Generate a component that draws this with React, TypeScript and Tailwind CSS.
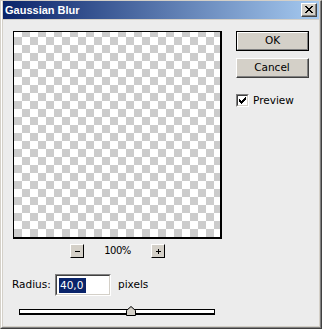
import React from "react";

function CloseGlyph() {
  const rows = [
    [0, 1, 6, 7],
    [1, 2, 5, 6],
    [2, 3, 4, 5],
    [3, 4],
    [2, 3, 4, 5],
    [1, 2, 5, 6],
    [0, 1, 6, 7],
  ];
  return (
    <svg width="8" height="7" viewBox="0 0 8 7" shapeRendering="crispEdges">
      {rows.map((cols, y) =>
        cols.map((x) => <rect key={`${x}-${y}`} x={x} y={y} width="1" height="1" fill="#000" />)
      )}
    </svg>
  );
}

function CheckGlyph() {
  const cols = [2, 3, 4, 3, 2, 1, 0];
  return (
    <svg width="7" height="7" viewBox="0 0 7 7" shapeRendering="crispEdges">
      {cols.map((top, x) => (
        <rect key={x} x={x} y={top} width="1" height="3" fill="#000" />
      ))}
    </svg>
  );
}

function SmallButton({ plus }: { plus?: boolean }) {
  return (
    <div className="w-[14px] h-[14px] bg-[#D4D0C8] border-t border-l border-t-white border-l-white border-r border-b border-r-black border-b-black flex items-center justify-center">
      <svg width="7" height="7" viewBox="0 0 7 7" shapeRendering="crispEdges">
        <rect x="1" y="3" width="5" height="1" fill="#000" />
        {plus && <rect x="3" y="1" width="1" height="5" fill="#000" />}
      </svg>
    </div>
  );
}

export default function App() {
  return (
    <div className="w-[322px] h-[329px] flex flex-col bg-[#D4D0C8] border-t border-l border-t-[#D4D0C8] border-l-[#D4D0C8] border-r border-b border-r-[#404040] border-b-[#404040] font-['DejaVu_Sans',sans-serif] text-[10.5px] text-black">
      <div className="flex-1 flex flex-col border-l border-l-white border-r border-r-[#808080] border-b border-b-[#808080] pl-px pr-px pb-px">
        {/* Title bar */}
        <div className="h-[18px] flex items-center justify-between bg-[linear-gradient(to_right,#0A246A,#A6CAF0)] pl-[2px] pr-[2px]">
          <span className="font-['Liberation_Sans',sans-serif] font-bold text-[11px] text-white leading-none">
            Gaussian Blur
          </span>
          <div className="w-[16px] h-[14px] bg-[#D4D0C8] border-t border-l border-t-white border-l-white border-r border-b border-r-[#404040] border-b-[#404040] flex">
            <div className="flex-1 border-r border-b border-r-[#808080] border-b-[#808080] flex items-start justify-start pl-[3px] pt-[2px]">
              <CloseGlyph />
            </div>
          </div>
        </div>
        <div className="h-px" />
        {/* Content */}
        <div className="flex-1 bg-[#ECECEC] flex flex-col pt-[11px]">
          <div className="flex pl-[10px] gap-[14px]">
            <div className="flex flex-col">
              <div className="w-[209px] h-[208px] flex border-t border-l border-r-2 border-b-2 border-black">
                <div className="flex-1 [background-image:repeating-conic-gradient(#cccccc_0_25%,#ffffff_0_50%)] [background-size:16px_16px] [background-position:0_-3px]" />
              </div>
              <div className="mt-[5px] flex items-center pl-[57px]">
                <SmallButton />
                <span className="w-[67px] text-center text-[10px] leading-none tracking-[-0.5px]">100%</span>
                <SmallButton plus />
              </div>
            </div>
            <div className="flex flex-col w-[73px]">
              <div className="h-[20px] border border-black flex">
                <div className="flex-1 flex bg-[#D4D0C8] border-t border-l border-t-white border-l-white border-r border-b border-r-[#808080] border-b-[#808080] items-center justify-center">
                  OK
                </div>
              </div>
              <div className="mt-[7px] h-[20px] flex bg-[#D4D0C8] border-t border-l border-t-white border-l-white border-r border-b border-r-[#404040] border-b-[#404040]">
                <div className="flex-1 flex items-center justify-center border-r border-b border-r-[#808080] border-b-[#808080]">
                  Cancel
                </div>
              </div>
              <div className="mt-[16px] flex items-center">
                <div className="w-[13px] h-[13px] flex border-t border-l border-t-[#808080] border-l-[#808080] border-r border-b border-r-white border-b-white">
                  <div className="flex-1 flex bg-white border-t border-l border-t-[#404040] border-l-[#404040] border-r border-b border-r-[#D4D0C8] border-b-[#D4D0C8] items-center justify-center">
                    <CheckGlyph />
                  </div>
                </div>
                <span className="ml-[4px] leading-none">Preview</span>
              </div>
            </div>
          </div>
          <div className="mt-[16px] pl-[9px] flex items-center">
            <span className="w-[43px]">Radius:</span>
            <div className="w-[56px] h-[22px] flex border-t border-l border-t-[#808080] border-l-[#808080] border-r border-b border-r-white border-b-white">
              <div className="flex-1 flex items-center bg-white border-t border-l border-t-[#404040] border-l-[#404040] border-r border-b border-r-[#D4D0C8] border-b-[#D4D0C8] pl-[2px]">
                <span className="bg-[#0A246A] text-white h-[15px] flex items-center pl-px pr-[3px] leading-none">40,0</span>
              </div>
            </div>
            <span className="ml-[7px]">pixels</span>
          </div>
          <div className="mt-[13px] ml-[16px] relative w-[196px] h-[6px] bg-white border-t border-l border-r border-b-2 border-black">
            <svg
              className="absolute left-[106px] top-[-4px]"
              width="10"
              height="10"
              viewBox="0 0 10 10"
            >
              <polygon points="0.5,9.5 0.5,4.5 5,0.5 9.5,4.5 9.5,9.5" fill="#D4D0C8" stroke="#000" strokeWidth="1" />
            </svg>
          </div>
        </div>
      </div>
    </div>
  );
}
